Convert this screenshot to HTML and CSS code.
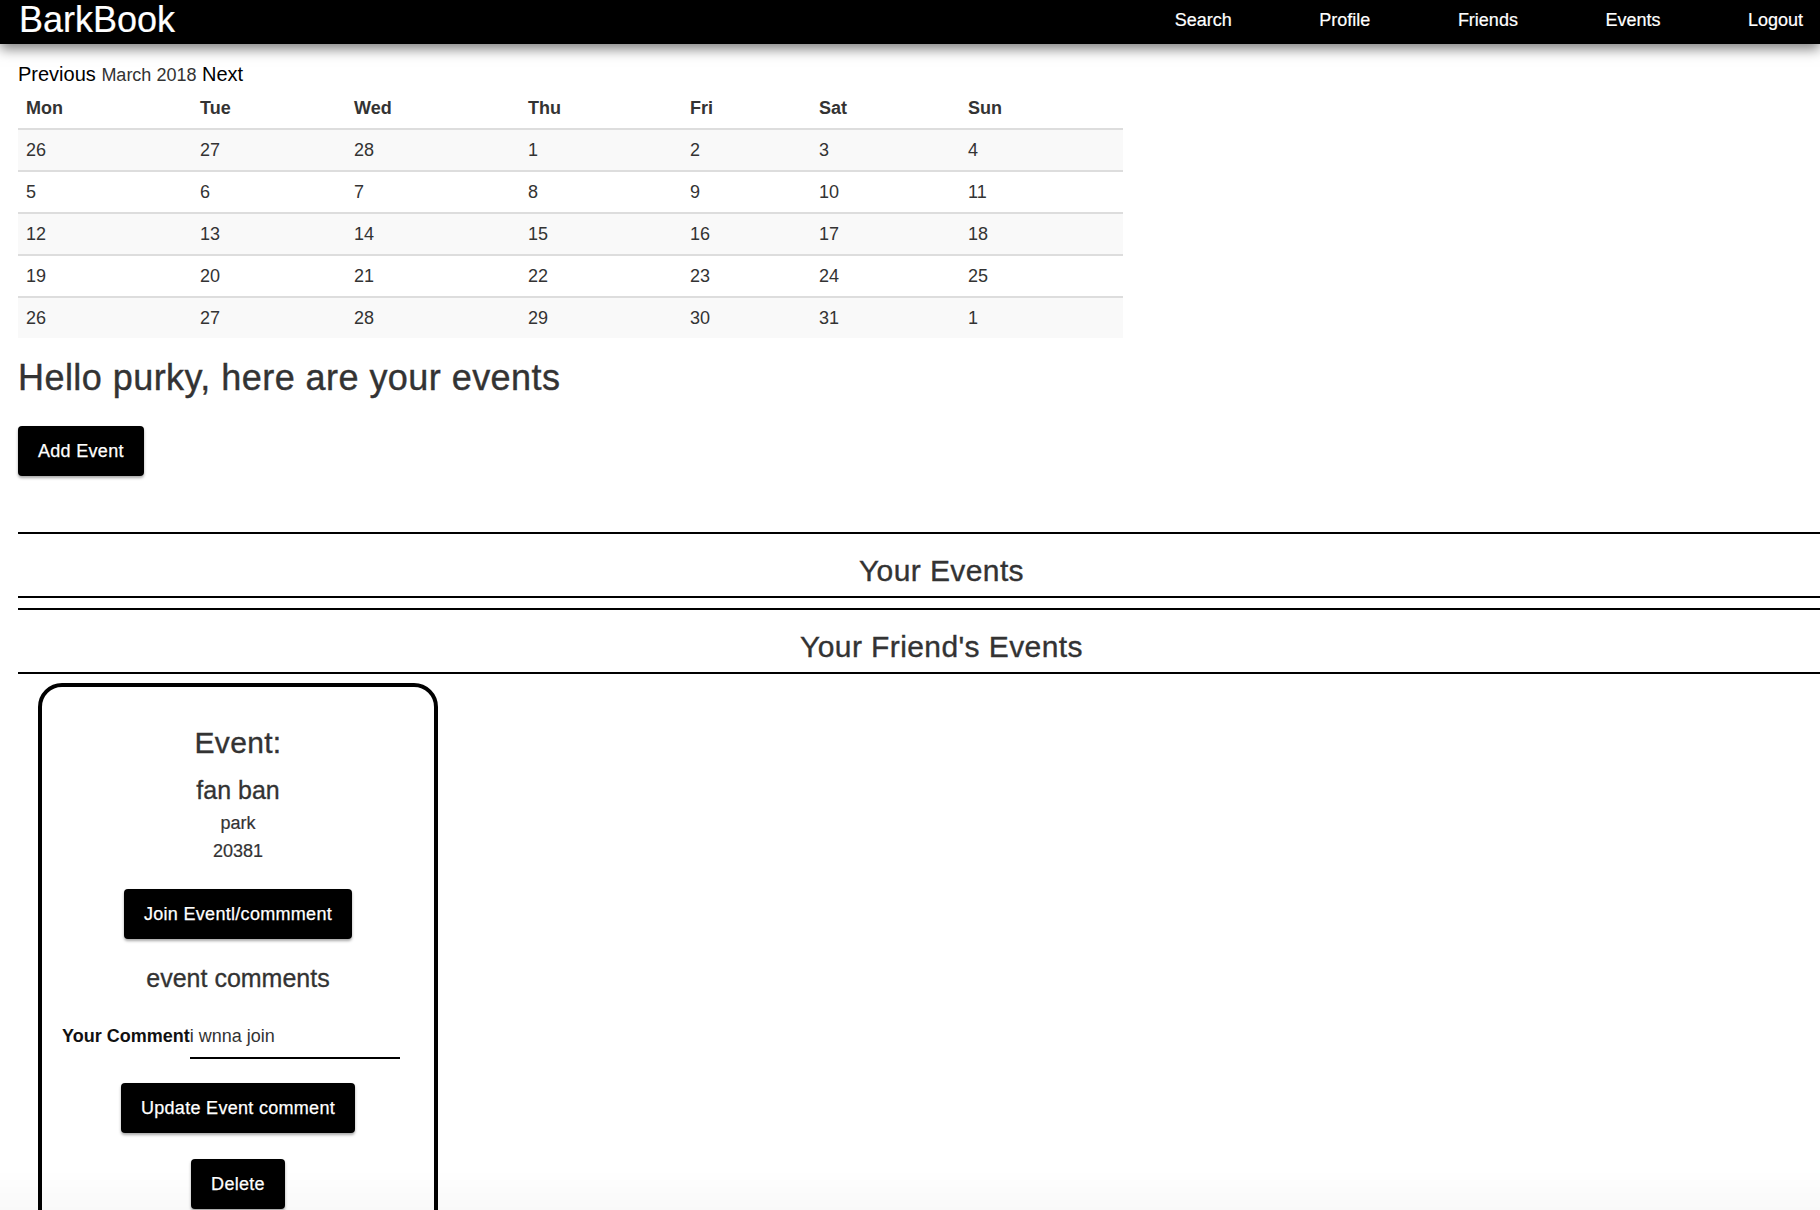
FILE: index.html
```html
<!DOCTYPE html>
<html lang="en">
<head>
<meta charset="utf-8">
<title>BarkBook</title>
<link rel="stylesheet" href="styles.css">
</head>
<body>
<header class="topbar">
  <div class="brand">BarkBook</div>
  <nav class="nav">
    <a href="#">Search</a>
    <a href="#">Profile</a>
    <a href="#">Friends</a>
    <a href="#">Events</a>
    <a href="#">Logout</a>
  </nav>
</header>
<main class="main">
  <div class="cal-nav"><span>Previous</span> <span class="month">March 2018</span> <span>Next</span></div>
  <table class="calendar">
    <colgroup>
      <col class="c-mon"><col class="c-tue"><col class="c-wed"><col class="c-thu"><col class="c-fri"><col class="c-sat"><col class="c-sun">
    </colgroup>
    <thead>
      <tr><th>Mon</th><th>Tue</th><th>Wed</th><th>Thu</th><th>Fri</th><th>Sat</th><th>Sun</th></tr>
    </thead>
    <tbody>
      <tr><td>26</td><td>27</td><td>28</td><td>1</td><td>2</td><td>3</td><td>4</td></tr>
      <tr><td>5</td><td>6</td><td>7</td><td>8</td><td>9</td><td>10</td><td>11</td></tr>
      <tr><td>12</td><td>13</td><td>14</td><td>15</td><td>16</td><td>17</td><td>18</td></tr>
      <tr><td>19</td><td>20</td><td>21</td><td>22</td><td>23</td><td>24</td><td>25</td></tr>
      <tr><td>26</td><td>27</td><td>28</td><td>29</td><td>30</td><td>31</td><td>1</td></tr>
    </tbody>
  </table>

  <h1 class="greeting">Hello purky, here are your events</h1>
  <button class="btn add-btn">Add Event</button>

  <section class="divider-section first">
    <h2 class="section-title">Your Events</h2>
  </section>
  <section class="divider-section">
    <h2 class="section-title">Your Friend's Events</h2>
  </section>

  <div class="event-card">
    <h2 class="card-title">Event:</h2>
    <h3 class="card-name">fan ban</h3>
    <p class="card-info first-info">park</p>
    <p class="card-info">20381</p>
    <button class="btn join-btn">Join Eventl/commment</button>
    <h3 class="comments-title">event comments</h3>
    <div class="comment-row">
      <label class="comment-label">Your Comment</label>
      <input class="comment-input" type="text" value="i wnna join">
    </div>
    <button class="btn update-btn">Update Event comment</button>
    <button class="btn delete-btn">Delete</button>
  </div>
</main>
<div class="bottom-fade"></div>
</body>
</html>
```

FILE: styles.css
```css
* {
  box-sizing: border-box;
}

body {
  margin: 0;
  font-family: "Liberation Sans", Arial, Helvetica, sans-serif;
  font-size: 18px;
  color: #333;
  background: #fff;
}

.topbar {
  position: relative;
  z-index: 2;
  height: 44px;
  background: #000;
  display: flex;
  justify-content: space-between;
  align-items: flex-start;
  padding: 0 17px 0 19px;
  box-shadow: 0 5px 12px rgba(0, 0, 0, 0.5);
}

.brand {
  color: #fff;
  font-size: 36px;
  line-height: 39px;
  -webkit-text-stroke: 0.2px #fff;
}

.nav {
  display: flex;
  gap: 87.5px;
}

.nav a {
  color: #fff;
  font-size: 18px;
  line-height: 41px;
  text-decoration: none;
  -webkit-text-stroke: 0.2px #fff;
}

.main {
  padding: 18px 0 0 18px;
}

.cal-nav {
  font-size: 20px;
  line-height: 25px;
  color: #000;
}

.cal-nav .month {
  font-size: 18px;
  color: #333;
}

.calendar {
  width: 1105px;
  table-layout: fixed;
  border-collapse: separate;
  border-spacing: 0;
}

.c-mon { width: 174px; }
.c-tue { width: 154px; }
.c-wed { width: 174px; }
.c-thu { width: 162px; }
.c-fri { width: 129px; }
.c-sat { width: 149px; }
.c-sun { width: 163px; }

.calendar th {
  text-align: left;
  font-weight: bold;
  padding: 8px;
  line-height: 24px;
  border-bottom: 2px solid #ddd;
}

.calendar td {
  padding: 8px;
  line-height: 24px;
  border-top: 2px solid #ddd;
}

.calendar tbody tr:first-child td {
  border-top: 0;
}

.calendar tbody tr:nth-child(odd) {
  background: #f9f9f9;
}

.greeting {
  margin: 20px 0 0;
  font-size: 36px;
  line-height: 39.6px;
  font-weight: normal;
  letter-spacing: 0.45px;
  color: #333;
  -webkit-text-stroke: 0.4px #333;
}

.btn {
  display: block;
  background: #000;
  color: #fff;
  border: 0;
  border-radius: 4px;
  padding: 12px 20px;
  font-family: "Liberation Sans", Arial, Helvetica, sans-serif;
  font-size: 18px;
  line-height: 26px;
  letter-spacing: 0.3px;
  -webkit-text-stroke: 0.25px #fff;
  box-shadow: 0 2px 3px rgba(0, 0, 0, 0.35);
  cursor: pointer;
}

.add-btn {
  margin-top: 28px;
}

.divider-section {
  border-top: 2px solid #000;
  border-bottom: 2px solid #000;
  margin-top: 10px;
}

.divider-section.first {
  margin-top: 56px;
}

.section-title {
  margin: 20px 0 9px;
  padding-left: 45px;
  text-align: center;
  font-size: 30px;
  line-height: 33px;
  font-weight: normal;
  letter-spacing: 0.4px;
  color: #333;
  -webkit-text-stroke: 0.35px #333;
}

.event-card {
  width: 400px;
  margin: 9px 0 0 20px;
  border: 4px solid #000;
  border-radius: 24px;
  padding: 39px 20px 60px;
  display: flex;
  flex-direction: column;
  align-items: center;
}

.card-title {
  margin: 0;
  font-size: 30px;
  line-height: 33px;
  font-weight: normal;
  letter-spacing: 0.3px;
  color: #333;
  -webkit-text-stroke: 0.35px #333;
}

.card-name {
  margin: 18px 0 0;
  font-size: 25px;
  line-height: 26px;
  font-weight: normal;
  color: #333;
  -webkit-text-stroke: 0.3px #333;
}

.card-info {
  margin: 0;
  font-size: 18px;
  line-height: 28px;
  color: #333;
  -webkit-text-stroke: 0.2px #333;
}

.card-info.first-info {
  margin-top: 6px;
}

.join-btn {
  margin-top: 24px;
}

.comments-title {
  margin: 26px 0 0;
  font-size: 25px;
  line-height: 26px;
  font-weight: normal;
  color: #333;
  -webkit-text-stroke: 0.3px #333;
}

.comment-row {
  align-self: flex-start;
  display: flex;
  align-items: baseline;
  margin-top: 26px;
}

.comment-label {
  font-weight: bold;
  color: #111;
  font-size: 18px;
}

.comment-input {
  width: 210px;
  height: 42px;
  padding: 0;
  margin: 0;
  border: 0;
  border-bottom: 2px solid #000;
  background: transparent;
  font-family: "Liberation Sans", Arial, Helvetica, sans-serif;
  font-size: 18px;
  color: #333;
  outline: none;
}

.update-btn {
  margin-top: 24px;
}

.delete-btn {
  margin-top: 26px;
}

.bottom-fade {
  position: fixed;
  left: 0;
  right: 0;
  bottom: 0;
  height: 40px;
  background: linear-gradient(to bottom, rgba(0, 0, 0, 0), rgba(0, 0, 0, 0.025));
  pointer-events: none;
}
```
